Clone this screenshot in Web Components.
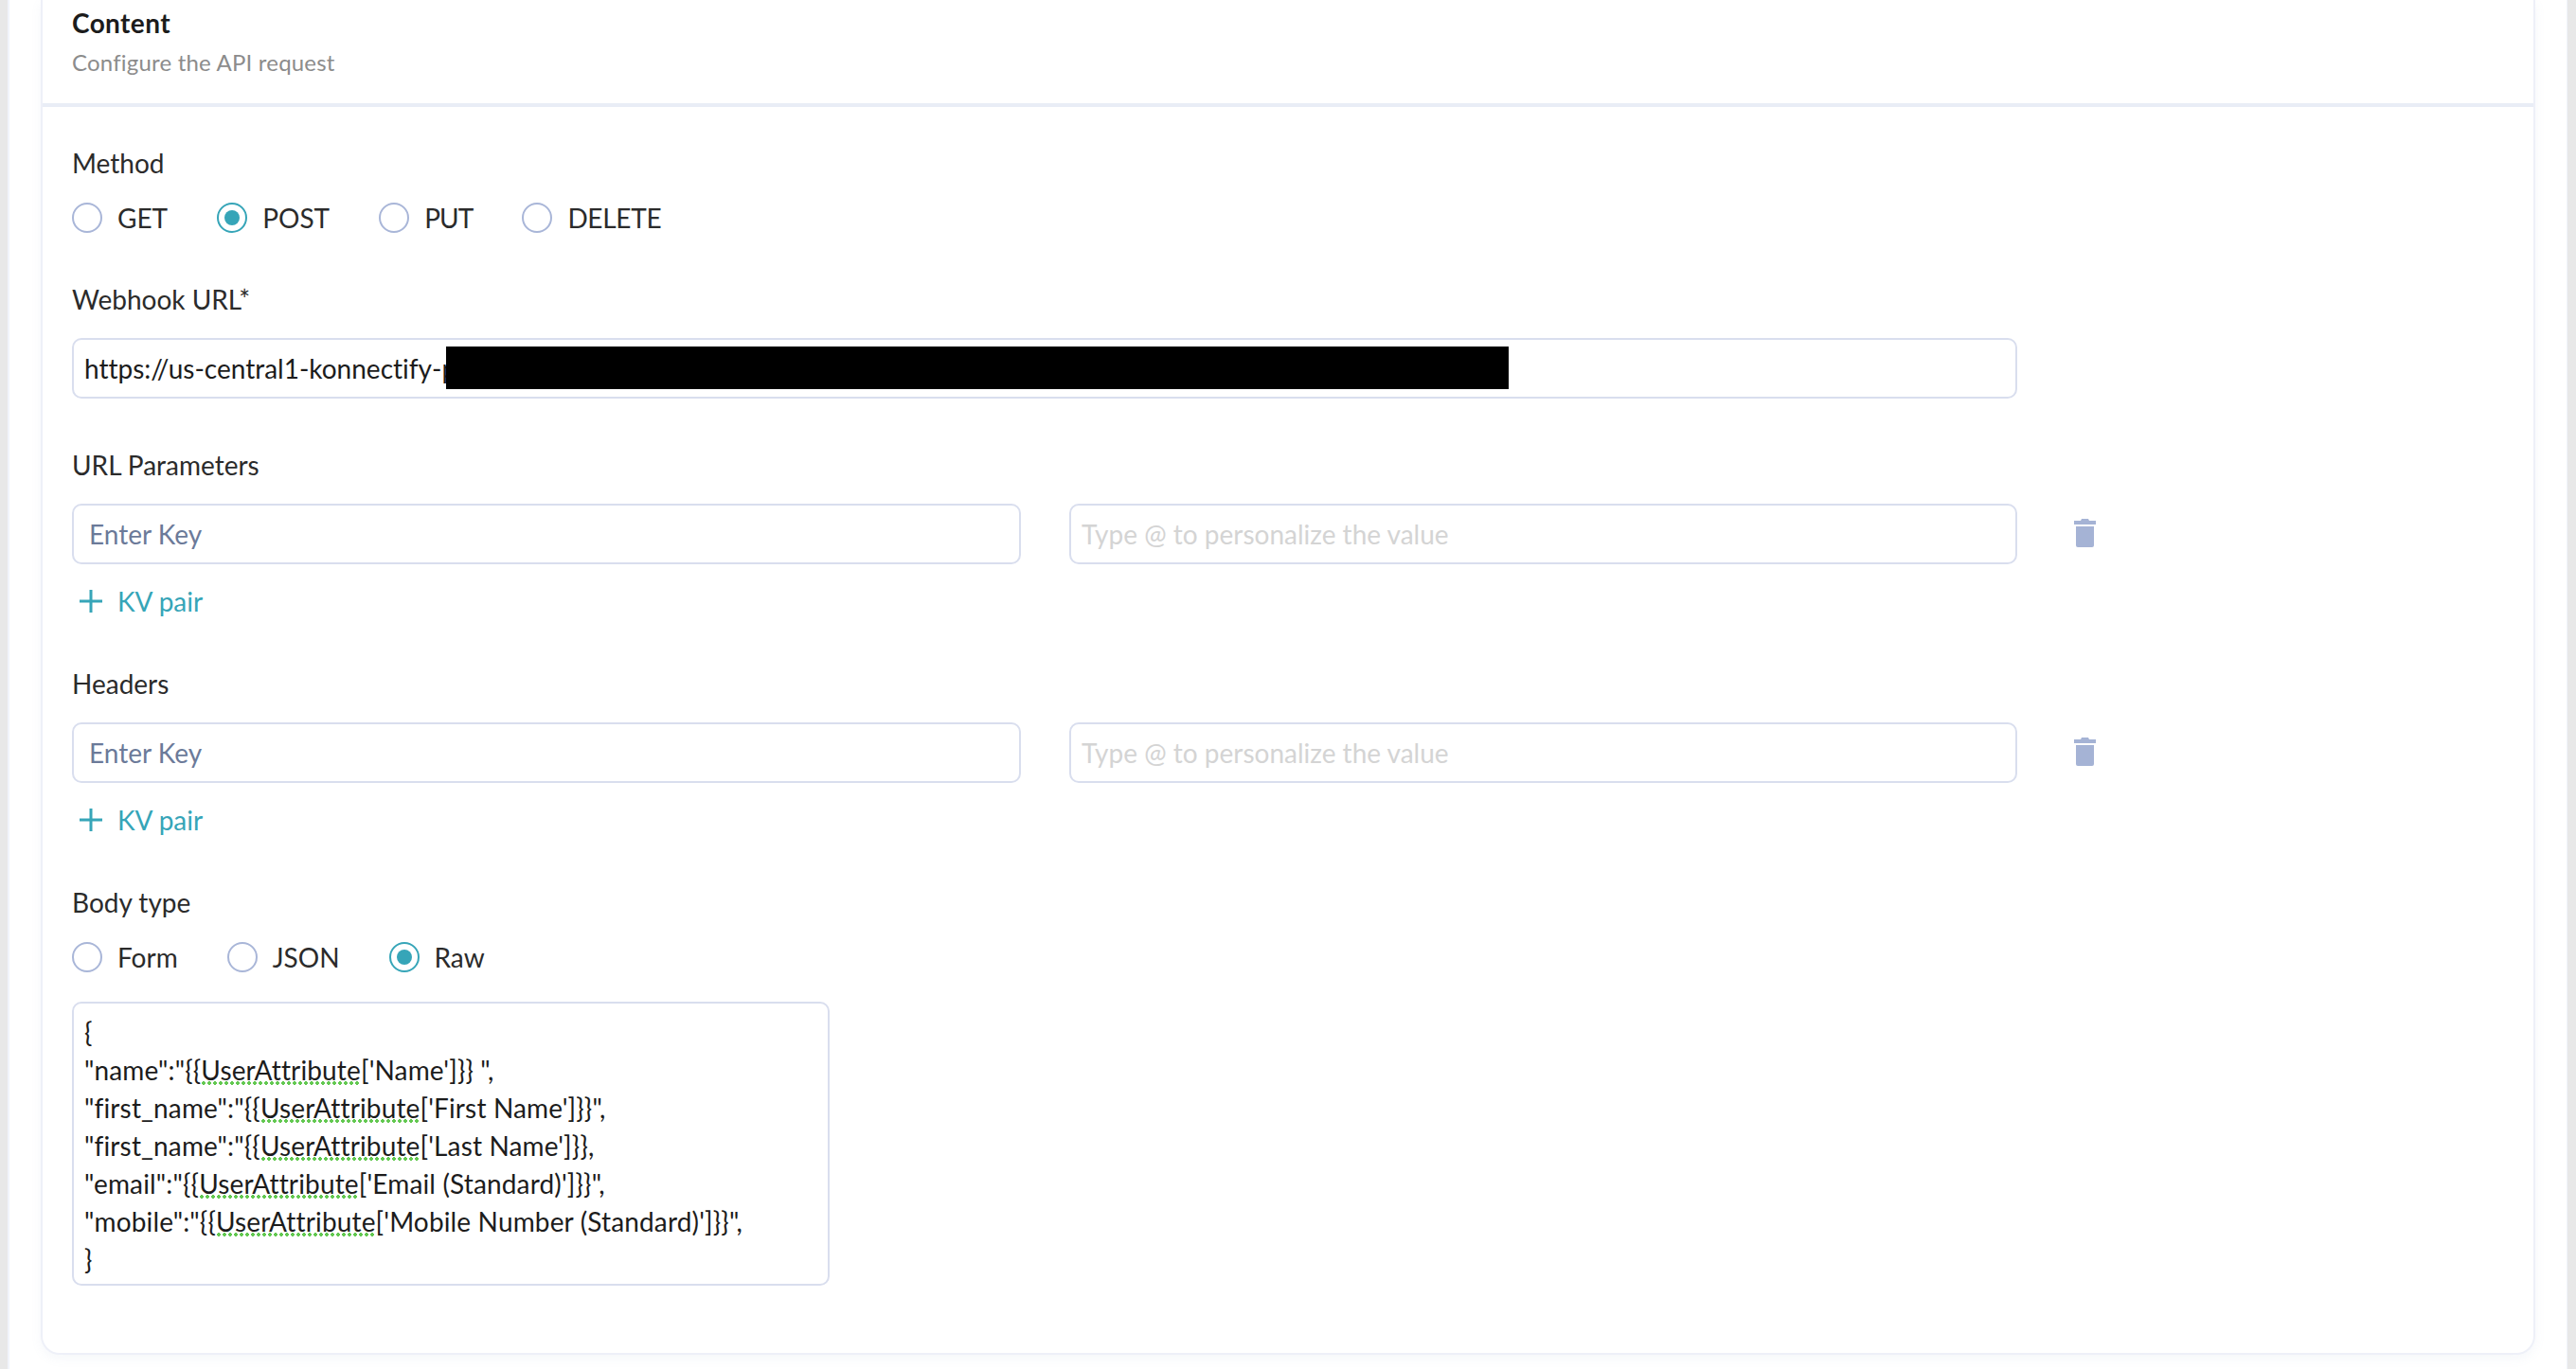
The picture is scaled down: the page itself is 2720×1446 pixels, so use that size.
<!DOCTYPE html>
<html>
<head>
<meta charset="utf-8">
<title>Content</title>
<style>
  html, body { margin: 0; padding: 0; background: #fff; }
  body { font-family: Lato, "Liberation Sans", sans-serif; font-variant-ligatures: none; overflow: hidden; }
</style>
</head>
<body>
<app-shell>
  <config-card heading="Content" subheading="Configure the API request">
    <form-field label="Method" gap="22" top="39">
      <radio-group>
        <radio-option>GET</radio-option>
        <radio-option checked>POST</radio-option>
        <radio-option style="letter-spacing:-.9px">PUT</radio-option>
        <radio-option style="letter-spacing:-.3px">DELETE</radio-option>
      </radio-group>
    </form-field>

    <form-field label="Webhook URL*" gap="21" top="50">
      <text-box redacted style="width:2054px">https://us-central1-konnectify-p</text-box>
    </form-field>

    <form-field label="URL Parameters" gap="21" top="50">
      <kv-row></kv-row>
      <kv-add></kv-add>
    </form-field>

    <form-field label="Headers" gap="21" top="47">
      <kv-row></kv-row>
      <kv-add></kv-add>
    </form-field>

    <form-field label="Body type" gap="22" top="47">
      <radio-group>
        <radio-option>Form</radio-option>
        <radio-option>JSON</radio-option>
        <radio-option checked>Raw</radio-option>
      </radio-group>
      <raw-editor>
        <code-line>{</code-line>
        <code-line>"name":"{{<attr-token>UserAttribute</attr-token>['Name']}} ",</code-line>
        <code-line>"first_name":"{{<attr-token>UserAttribute</attr-token>['First Name']}}",</code-line>
        <code-line>"first_name":"{{<attr-token>UserAttribute</attr-token>['Last Name']}},</code-line>
        <code-line>"email":"{{<attr-token>UserAttribute</attr-token>['Email (Standard)']}}",</code-line>
        <code-line>"mobile":"{{<attr-token>UserAttribute</attr-token>['Mobile Number (Standard)']}}",</code-line>
        <code-line>}</code-line>
      </raw-editor>
    </form-field>
  </config-card>
</app-shell>

<script>
// Small helper: every element below is a shadow root plus its own style.
function shadow(el, html) {
  el.attachShadow({ mode: 'open' });
  el.shadowRoot.innerHTML = html;
}

class AppShell extends HTMLElement {
  constructor() {
    super();
    shadow(this, `
      <style>
        :host {
          display: block;
          box-sizing: border-box;
          height: 1446px;
          overflow: hidden;
          border-left: 8px solid #e8e8e8;
          border-right: 9px solid #e8e8e8;
          padding: 0 34px 0 35px;
          box-shadow: inset 2px 0 0 #f1f4fb, inset -1px 0 0 #f1f4fb;
        }
      </style>
      <slot></slot>`);
  }
}

class ConfigCard extends HTMLElement {
  constructor() {
    super();
    shadow(this, `
      <style>
        :host {
          display: block;
          box-sizing: border-box;
          height: 1431px;
          background: #fff;
          border: 2px solid #eef0f8;
          border-top: 0;
          border-radius: 0 0 20px 20px;
          box-shadow: 0 4px 12px rgba(120, 135, 180, .07);
        }
        header {
          padding: 4px 31px 26px;
          border-bottom: 4px solid #e9edf6;
        }
        h2 {
          margin: 0;
          font-size: 28px;
          line-height: 40px;
          font-weight: 700;
          letter-spacing: .4px;
          color: #1c1c1c;
        }
        p {
          margin: 5px 0 0;
          font-size: 24px;
          line-height: 34px;
          letter-spacing: .2px;
          color: #8c8c8c;
        }
        .body { padding: 0 31px; }
      </style>
      <header>
        <h2>${this.getAttribute('heading')}</h2>
        <p>${this.getAttribute('subheading')}</p>
      </header>
      <div class="body"><slot></slot></div>`);
  }
}

class FormField extends HTMLElement {
  constructor() {
    super();
    shadow(this, `
      <style>
        :host {
          display: block;
          margin-top: ${this.getAttribute('top') || 0}px;
        }
        label {
          display: block;
          font-size: 28px;
          line-height: 40px;
          color: #2b2b2b;
          margin-bottom: ${this.getAttribute('gap') || 20}px;
        }
      </style>
      <label>${this.getAttribute('label')}</label>
      <slot></slot>`);
  }
}

class RadioGroup extends HTMLElement {
  constructor() {
    super();
    shadow(this, `
      <style>
        :host { display: flex; gap: 52px; height: 32px; align-items: center; }
      </style>
      <slot></slot>`);
  }
}

class RadioOption extends HTMLElement {
  constructor() {
    super();
    const on = this.hasAttribute('checked');
    shadow(this, `
      <style>
        :host {
          display: inline-flex;
          align-items: center;
          gap: 16px;
          font-size: 28px;
          line-height: 32px;
          color: #2b2b2b;
        }
        i {
          box-sizing: border-box;
          width: 32px;
          height: 32px;
          border-radius: 50%;
          border: 2px solid ${on ? '#36a5b8' : '#a9b6d8'};
          display: flex;
          align-items: center;
          justify-content: center;
        }
        i::after {
          content: '';
          width: 16px;
          height: 16px;
          border-radius: 50%;
          background: ${on ? '#36a5b8' : 'transparent'};
        }
      </style>
      <i></i><slot></slot>`);
  }
}

class TextBox extends HTMLElement {
  constructor() {
    super();
    const redacted = this.hasAttribute('redacted');
    shadow(this, `
      <style>
        :host {
          display: flex;
          position: relative;
          align-items: center;
          box-sizing: border-box;
          height: 64px;
          padding: 0 ${this.getAttribute('pad') || 11}px;
          background: #fff;
          border: 2px solid #d9deee;
          border-radius: 10px;
          font-size: 28px;
          color: ${this.getAttribute('color') || '#1c1c1c'};
          white-space: nowrap;
        }
        .bar {
          position: absolute;
          left: 393px;
          top: 7px;
          width: 1122px;
          height: 45px;
          background: #000;
        }
      </style>
      <slot></slot>${redacted ? '<div class="bar"></div>' : ''}`);
  }
}

class KvRow extends HTMLElement {
  constructor() {
    super();
    shadow(this, `
      <style>
        :host {
          display: grid;
          grid-template-columns: 1002px 1001px 23px;
          column-gap: 51px;
          align-items: center;
        }
        svg { display: block; margin: 0 0 2px 9px; }
      </style>
      <text-box pad="16" color="#6b7a99">Enter Key</text-box>
      <text-box pad="11" color="#d4d4d4">Type @ to personalize the value</text-box>
      <svg width="23" height="30" viewBox="0 0 23 30" fill="#a5b3d5">
        <path d="M8 0h7l1 2h7v4H0V2h7z"/>
        <path d="M2 8h19v20a2 2 0 0 1-2 2H4a2 2 0 0 1-2-2z"/>
      </svg>`);
  }
}

class KvAdd extends HTMLElement {
  constructor() {
    super();
    shadow(this, `
      <style>
        :host {
          display: flex;
          align-items: center;
          gap: 16px;
          margin: 19px 0 0 8px;
          height: 40px;
          font-size: 28px;
          color: #36a5b8;
        }
        svg { display: block; }
      </style>
      <svg width="24" height="24" viewBox="0 0 24 24" stroke="#36a5b8" stroke-width="3" fill="none">
        <path d="M12 0v24M0 12h24"/>
      </svg>
      <span>KV pair</span>`);
  }
}

class RawEditor extends HTMLElement {
  constructor() {
    super();
    shadow(this, `
      <style>
        :host {
          display: block;
          box-sizing: border-box;
          width: 800px;
          height: 300px;
          margin-top: 31px;
          padding: 10px 11px;
          border: 2px solid #d9deee;
          border-radius: 10px;
          font-size: 28px;
          letter-spacing: .15px;
          color: #1c1c1c;
        }
      </style>
      <slot></slot>`);
  }
}

// white-space: pre is set here, so no whitespace may stand in these two templates.
class CodeLine extends HTMLElement {
  constructor() {
    super();
    shadow(this, '<style>:host { display: block; line-height: 40px; white-space: pre; }</style><slot></slot>');
  }
}

class AttrToken extends HTMLElement {
  constructor() {
    super();
    shadow(this, '<style>:host { display: inline-block; line-height: 32px; background: radial-gradient(circle, #62c850 1.6px, transparent 1.9px) repeat-x left bottom / 6px 4px; }</style><slot></slot>');
  }
}

customElements.define('app-shell', AppShell);
customElements.define('config-card', ConfigCard);
customElements.define('form-field', FormField);
customElements.define('radio-group', RadioGroup);
customElements.define('radio-option', RadioOption);
customElements.define('text-box', TextBox);
customElements.define('kv-row', KvRow);
customElements.define('kv-add', KvAdd);
customElements.define('raw-editor', RawEditor);
customElements.define('code-line', CodeLine);
customElements.define('attr-token', AttrToken);
</script>
</body>
</html>
